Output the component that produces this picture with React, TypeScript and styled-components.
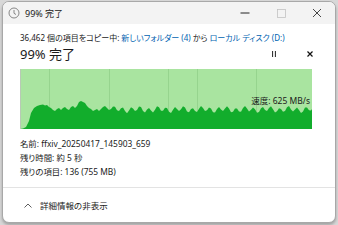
import React from "react";
import styled, { createGlobalStyle } from "styled-components";

const Global = createGlobalStyle`
  html, body { margin: 0; padding: 0; background: #d8d8d8; }
  body { width: 338px; height: 225px; overflow: hidden; font-family: "Noto Sans", "Noto Sans CJK JP", sans-serif; color: #1a1a1a; font-feature-settings: "palt" 1; }
`;

const Window = styled.div`
  box-sizing: border-box;
  margin: 1px 2px 0 2px;
  width: 334px;
  height: 222px;
  background: #ffffff;
  border: 1px solid #a8a8a8;
  border-radius: 7px;
  overflow: hidden;
  display: flex;
  flex-direction: column;
  box-shadow: 0 2px 3px rgba(0,0,0,0.25);
`;

const TitleBar = styled.div`
  height: 22px;
  flex: none;
  background: #f3f3f3;
  display: flex;
  align-items: center;
`;

const TitleIcon = styled.div`
  width: 12px;
  height: 12px;
  margin-left: 5px;
  display: flex;
`;

const TitleText = styled.div`
  margin-left: 5px;
  font-size: 9px;
  flex: 1;
  color: #202020;
`;

const WinButton = styled.div<{ $dim?: boolean }>`
  width: 36px;
  height: 22px;
  display: flex;
  align-items: center;
  justify-content: center;
  opacity: ${(p) => (p.$dim ? 0.3 : 1)};
`;

const Main = styled.div`
  flex: none;
  height: 164px;
  padding: 7px 22px 0 17px;
  box-sizing: border-box;
  border-bottom: 1px solid #e3e3e3;
`;

const Status = styled.div`
  font-size: 8px;
  line-height: 14px;
  white-space: nowrap;
  color: #1a1a1a;
`;

const Link = styled.span`
  color: #0063b1;
`;

const ProgressRow = styled.div`
  display: flex;
  align-items: center;
  height: 18px;
`;

const Percent = styled.div`
  font-size: 13px;
  line-height: 18px;
  flex: 1;
  color: #1a1a1a;
`;

const Controls = styled.div`
  display: flex;
  align-items: center;
  gap: 31px;
  margin-right: 0.5px;
`;

const ChartBox = styled.div`
  position: relative;
  margin-top: 6px;
  width: 292px;
  height: 60px;
`;

const Speed = styled.div`
  position: absolute;
  right: 2px;
  top: 26px;
  font-size: 8.5px;
  line-height: 12px;
  color: #1a1a1a;
`;

const Info = styled.div`
  margin-top: 8px;
`;

const InfoLine = styled.div`
  font-size: 8.4px;
  line-height: 14px;
  white-space: nowrap;
`;

const Footer = styled.div`
  flex: 1;
  display: flex;
  align-items: center;
  padding-left: 21px;
  gap: 8px;
  font-size: 8.5px;
  color: #1a1a1a;
`;

const basePts: [number, number][] = [
  [0, 60], [3, 59.5], [6, 58], [9, 52], [11, 44], [14, 39], [17, 37], [20, 36], [23, 35.5], [25, 36.5], [27, 36],
  [29, 38], [31, 39], [33, 41], [35, 42], [37, 40], [39, 39], [41, 41], [43, 39], [45, 38], [47, 40], [49, 41],
  [51, 38], [53, 37], [55, 39], [57, 37], [59, 33], [61, 32], [63, 33], [65, 34], [67, 37], [69, 39], [71, 40],
  [73, 42], [75, 41], [77, 40], [79, 42], [81, 40], [83, 38], [85, 37], [87, 39], [89, 41], [91, 40],
];

function buildPath(): string {
  const pts = [...basePts];
  for (let x = 93; x <= 291; x += 2) {
    const y = 40.5 + 2.6 * Math.sin(x * 0.72) + 1.1 * Math.sin(x * 0.29 + 2);
    pts.push([x, y]);
  }
  pts.push([292, 40], [292, 60]);
  return "M" + pts.map((p) => `${p[0]},${p[1].toFixed(1)}`).join(" L") + " Z";
}

const fillPath = buildPath();
const grid = [29, 89, 148, 177, 236];

export default function App() {
  return (
    <>
      <Global />
      <Window>
        <TitleBar>
          <TitleIcon>
            <svg width="12" height="12" viewBox="0 0 12 12">
              <circle cx="6" cy="6" r="5" fill="none" stroke="#7a7a7a" strokeWidth="0.9" />
              <path d="M6 3 V6.3 L8 7.5" fill="none" stroke="#7a7a7a" strokeWidth="0.9" />
            </svg>
          </TitleIcon>
          <TitleText>99% 完了</TitleText>
          <WinButton>
            <svg width="10" height="10" viewBox="0 0 10 10">
              <path d="M0.5 5 H9.5" stroke="#222" strokeWidth="1" />
            </svg>
          </WinButton>
          <WinButton $dim>
            <svg width="9" height="9" viewBox="0 0 9 9">
              <rect x="0.5" y="0.5" width="8" height="8" fill="none" stroke="#555" strokeWidth="0.8" />
            </svg>
          </WinButton>
          <WinButton>
            <svg width="10" height="10" viewBox="0 0 10 10">
              <path d="M1 1 L9 9 M9 1 L1 9" stroke="#333" strokeWidth="0.9" />
            </svg>
          </WinButton>
        </TitleBar>
        <Main>
          <Status>
            36,462 個の項目をコピー中: <Link>新しいフォルダー (4)</Link> から <Link>ローカル ディスク (D:)</Link>
          </Status>
          <ProgressRow>
            <Percent>99% 完了</Percent>
            <Controls>
              <svg width="4" height="6" viewBox="0 0 4 6">
                <path d="M0.6 0 V6 M3.4 0 V6" stroke="#222" strokeWidth="1" />
              </svg>
              <svg width="6" height="6" viewBox="0 0 6 6">
                <path d="M0.5 0.5 L5.5 5.5 M5.5 0.5 L0.5 5.5" stroke="#111" strokeWidth="1.2" />
              </svg>
            </Controls>
          </ProgressRow>
          <ChartBox>
            <svg width="292" height="60" viewBox="0 0 292 60">
              <rect x="0" y="0" width="292" height="60" fill="#a9e4a0" />
              {grid.map((g) => (
                <line key={g} x1={g + 0.5} y1="0" x2={g + 0.5} y2="60" stroke="#96d48e" strokeWidth="1" />
              ))}
              <path d={fillPath} fill="#12ad2c" />
              <line x1="0.5" y1="0" x2="0.5" y2="60" stroke="#b9c9b6" strokeWidth="1" />
            </svg>
            <Speed>速度: 625 MB/s</Speed>
          </ChartBox>
          <Info>
            <InfoLine>名前: ffxiv_20250417_145903_659</InfoLine>
            <InfoLine>残り時間: 約 5 秒</InfoLine>
            <InfoLine>残りの項目: 136 (755 MB)</InfoLine>
          </Info>
        </Main>
        <Footer>
          <svg width="8" height="5" viewBox="0 0 8 5">
            <path d="M0.5 4.5 L4 1 L7.5 4.5" fill="none" stroke="#333" strokeWidth="0.8" />
          </svg>
          <span>詳細情報の非表示</span>
        </Footer>
      </Window>
    </>
  );
}
